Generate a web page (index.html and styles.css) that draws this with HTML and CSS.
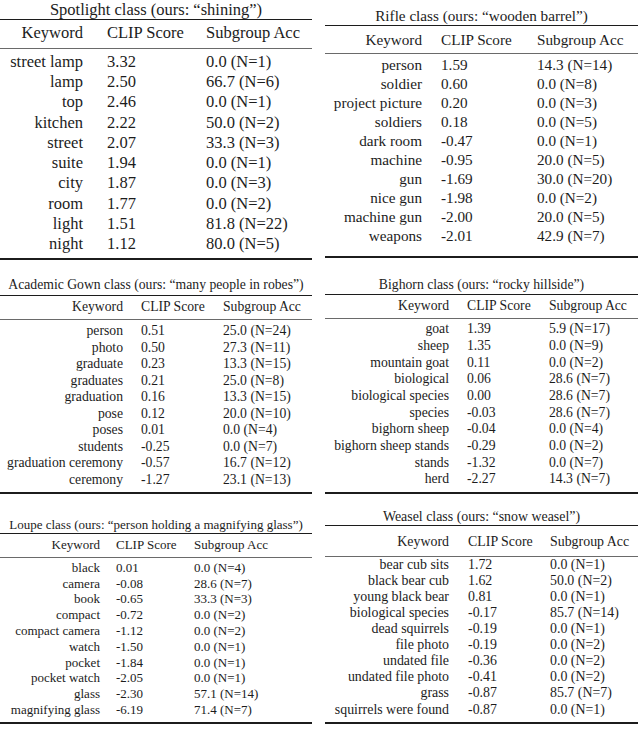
FILE: index.html
```html
<!DOCTYPE html>
<html lang="en">
<head>
<meta charset="utf-8">
<title>Keyword subgroup tables</title>
<link rel="stylesheet" href="styles.css">
</head>
<body>
<main class="page">
  <section class="tbl t1">
    <div class="cap">Spotlight class (ours: “shining”)</div>
    <table>
      <thead><tr><th class="kw">Keyword</th><th class="cs">CLIP Score</th><th class="sa">Subgroup Acc</th></tr></thead>
      <tbody>
        <tr><td class="kw">street lamp</td><td class="cs">3.32</td><td class="sa">0.0 (N=1)</td></tr>
        <tr><td class="kw">lamp</td><td class="cs">2.50</td><td class="sa">66.7 (N=6)</td></tr>
        <tr><td class="kw">top</td><td class="cs">2.46</td><td class="sa">0.0 (N=1)</td></tr>
        <tr><td class="kw">kitchen</td><td class="cs">2.22</td><td class="sa">50.0 (N=2)</td></tr>
        <tr><td class="kw">street</td><td class="cs">2.07</td><td class="sa">33.3 (N=3)</td></tr>
        <tr><td class="kw">suite</td><td class="cs">1.94</td><td class="sa">0.0 (N=1)</td></tr>
        <tr><td class="kw">city</td><td class="cs">1.87</td><td class="sa">0.0 (N=3)</td></tr>
        <tr><td class="kw">room</td><td class="cs">1.77</td><td class="sa">0.0 (N=2)</td></tr>
        <tr><td class="kw">light</td><td class="cs">1.51</td><td class="sa">81.8 (N=22)</td></tr>
        <tr><td class="kw">night</td><td class="cs">1.12</td><td class="sa">80.0 (N=5)</td></tr>
      </tbody>
    </table>
  </section>

  <section class="tbl t2">
    <div class="cap">Rifle class (ours: “wooden barrel”)</div>
    <table>
      <thead><tr><th class="kw">Keyword</th><th class="cs">CLIP Score</th><th class="sa">Subgroup Acc</th></tr></thead>
      <tbody>
        <tr><td class="kw">person</td><td class="cs">1.59</td><td class="sa">14.3 (N=14)</td></tr>
        <tr><td class="kw">soldier</td><td class="cs">0.60</td><td class="sa">0.0 (N=8)</td></tr>
        <tr><td class="kw">project picture</td><td class="cs">0.20</td><td class="sa">0.0 (N=3)</td></tr>
        <tr><td class="kw">soldiers</td><td class="cs">0.18</td><td class="sa">0.0 (N=5)</td></tr>
        <tr><td class="kw">dark room</td><td class="cs">-0.47</td><td class="sa">0.0 (N=1)</td></tr>
        <tr><td class="kw">machine</td><td class="cs">-0.95</td><td class="sa">20.0 (N=5)</td></tr>
        <tr><td class="kw">gun</td><td class="cs">-1.69</td><td class="sa">30.0 (N=20)</td></tr>
        <tr><td class="kw">nice gun</td><td class="cs">-1.98</td><td class="sa">0.0 (N=2)</td></tr>
        <tr><td class="kw">machine gun</td><td class="cs">-2.00</td><td class="sa">20.0 (N=5)</td></tr>
        <tr><td class="kw">weapons</td><td class="cs">-2.01</td><td class="sa">42.9 (N=7)</td></tr>
      </tbody>
    </table>
  </section>

  <section class="tbl t3">
    <div class="cap">Academic Gown class (ours: “many people in robes”)</div>
    <table>
      <thead><tr><th class="kw">Keyword</th><th class="cs">CLIP Score</th><th class="sa">Subgroup Acc</th></tr></thead>
      <tbody>
        <tr><td class="kw">person</td><td class="cs">0.51</td><td class="sa">25.0 (N=24)</td></tr>
        <tr><td class="kw">photo</td><td class="cs">0.50</td><td class="sa">27.3 (N=11)</td></tr>
        <tr><td class="kw">graduate</td><td class="cs">0.23</td><td class="sa">13.3 (N=15)</td></tr>
        <tr><td class="kw">graduates</td><td class="cs">0.21</td><td class="sa">25.0 (N=8)</td></tr>
        <tr><td class="kw">graduation</td><td class="cs">0.16</td><td class="sa">13.3 (N=15)</td></tr>
        <tr><td class="kw">pose</td><td class="cs">0.12</td><td class="sa">20.0 (N=10)</td></tr>
        <tr><td class="kw">poses</td><td class="cs">0.01</td><td class="sa">0.0 (N=4)</td></tr>
        <tr><td class="kw">students</td><td class="cs">-0.25</td><td class="sa">0.0 (N=7)</td></tr>
        <tr><td class="kw">graduation ceremony</td><td class="cs">-0.57</td><td class="sa">16.7 (N=12)</td></tr>
        <tr><td class="kw">ceremony</td><td class="cs">-1.27</td><td class="sa">23.1 (N=13)</td></tr>
      </tbody>
    </table>
  </section>

  <section class="tbl t4">
    <div class="cap">Bighorn class (ours: “rocky hillside”)</div>
    <table>
      <thead><tr><th class="kw">Keyword</th><th class="cs">CLIP Score</th><th class="sa">Subgroup Acc</th></tr></thead>
      <tbody>
        <tr><td class="kw">goat</td><td class="cs">1.39</td><td class="sa">5.9 (N=17)</td></tr>
        <tr><td class="kw">sheep</td><td class="cs">1.35</td><td class="sa">0.0 (N=9)</td></tr>
        <tr><td class="kw">mountain goat</td><td class="cs">0.11</td><td class="sa">0.0 (N=2)</td></tr>
        <tr><td class="kw">biological</td><td class="cs">0.06</td><td class="sa">28.6 (N=7)</td></tr>
        <tr><td class="kw">biological species</td><td class="cs">0.00</td><td class="sa">28.6 (N=7)</td></tr>
        <tr><td class="kw">species</td><td class="cs">-0.03</td><td class="sa">28.6 (N=7)</td></tr>
        <tr><td class="kw">bighorn sheep</td><td class="cs">-0.04</td><td class="sa">0.0 (N=4)</td></tr>
        <tr><td class="kw">bighorn sheep stands</td><td class="cs">-0.29</td><td class="sa">0.0 (N=2)</td></tr>
        <tr><td class="kw">stands</td><td class="cs">-1.32</td><td class="sa">0.0 (N=7)</td></tr>
        <tr><td class="kw">herd</td><td class="cs">-2.27</td><td class="sa">14.3 (N=7)</td></tr>
      </tbody>
    </table>
  </section>

  <section class="tbl t5">
    <div class="cap">Loupe class (ours: “person holding a magnifying glass”)</div>
    <table>
      <thead><tr><th class="kw">Keyword</th><th class="cs">CLIP Score</th><th class="sa">Subgroup Acc</th></tr></thead>
      <tbody>
        <tr><td class="kw">black</td><td class="cs">0.01</td><td class="sa">0.0 (N=4)</td></tr>
        <tr><td class="kw">camera</td><td class="cs">-0.08</td><td class="sa">28.6 (N=7)</td></tr>
        <tr><td class="kw">book</td><td class="cs">-0.65</td><td class="sa">33.3 (N=3)</td></tr>
        <tr><td class="kw">compact</td><td class="cs">-0.72</td><td class="sa">0.0 (N=2)</td></tr>
        <tr><td class="kw">compact camera</td><td class="cs">-1.12</td><td class="sa">0.0 (N=2)</td></tr>
        <tr><td class="kw">watch</td><td class="cs">-1.50</td><td class="sa">0.0 (N=1)</td></tr>
        <tr><td class="kw">pocket</td><td class="cs">-1.84</td><td class="sa">0.0 (N=1)</td></tr>
        <tr><td class="kw">pocket watch</td><td class="cs">-2.05</td><td class="sa">0.0 (N=1)</td></tr>
        <tr><td class="kw">glass</td><td class="cs">-2.30</td><td class="sa">57.1 (N=14)</td></tr>
        <tr><td class="kw">magnifying glass</td><td class="cs">-6.19</td><td class="sa">71.4 (N=7)</td></tr>
      </tbody>
    </table>
  </section>

  <section class="tbl t6">
    <div class="cap">Weasel class (ours: “snow weasel”)</div>
    <table>
      <thead><tr><th class="kw">Keyword</th><th class="cs">CLIP Score</th><th class="sa">Subgroup Acc</th></tr></thead>
      <tbody>
        <tr><td class="kw">bear cub sits</td><td class="cs">1.72</td><td class="sa">0.0 (N=1)</td></tr>
        <tr><td class="kw">black bear cub</td><td class="cs">1.62</td><td class="sa">50.0 (N=2)</td></tr>
        <tr><td class="kw">young black bear</td><td class="cs">0.81</td><td class="sa">0.0 (N=1)</td></tr>
        <tr><td class="kw">biological species</td><td class="cs">-0.17</td><td class="sa">85.7 (N=14)</td></tr>
        <tr><td class="kw">dead squirrels</td><td class="cs">-0.19</td><td class="sa">0.0 (N=1)</td></tr>
        <tr><td class="kw">file photo</td><td class="cs">-0.19</td><td class="sa">0.0 (N=2)</td></tr>
        <tr><td class="kw">undated file</td><td class="cs">-0.36</td><td class="sa">0.0 (N=2)</td></tr>
        <tr><td class="kw">undated file photo</td><td class="cs">-0.41</td><td class="sa">0.0 (N=2)</td></tr>
        <tr><td class="kw">grass</td><td class="cs">-0.87</td><td class="sa">85.7 (N=7)</td></tr>
        <tr><td class="kw">squirrels were found</td><td class="cs">-0.87</td><td class="sa">0.0 (N=1)</td></tr>
      </tbody>
    </table>
  </section>
</main>
</body>
</html>
```

FILE: styles.css
```css
html, body {
  margin: 0;
  padding: 0;
  background: #ffffff;
}

body {
  color: #1c1c1c;
  font-family: "Liberation Serif", "Times New Roman", serif;
}

.page {
  display: grid;
  grid-template-columns: 312px 313px;
  grid-template-rows: 265px 232px 233px;
  column-gap: 13px;
  width: 640px;
  height: 730px;
  overflow: hidden;
}

.tbl {
  font-family: "Liberation Serif", "Times New Roman", serif;
  font-size: var(--fs);
  min-width: 0;
}

.cap {
  text-align: center;
  white-space: nowrap;
  padding-top: var(--cap-pt);
  padding-bottom: var(--cap-pb);
  line-height: var(--cap-lh);
}

.tbl table {
  font: inherit;
  width: 100%;
  table-layout: fixed;
  border-collapse: separate;
  border-spacing: 0;
  border-top: var(--top-w) solid #1c1c1c;
  border-bottom: 2px solid #1c1c1c;
}

.tbl th,
.tbl td {
  font-family: "Liberation Serif", "Times New Roman", serif;
  font-size: var(--fs);
  font-weight: normal;
  color: #1c1c1c;
}

.tbl th {
  padding: var(--h-pt) 0 var(--h-pb) 0;
  line-height: var(--h-lh);
  border-bottom: 1px solid #6a6a6a;
  white-space: nowrap;
}

.tbl td {
  padding: 0;
  line-height: var(--r-lh);
  white-space: nowrap;
}

.tbl tbody tr:first-child td {
  padding-top: var(--b-pt);
}

.tbl tbody tr:last-child td {
  padding-bottom: var(--b-pb);
}

.tbl .kw {
  text-align: right;
}

.tbl th.kw {
  width: var(--c1);
}

.tbl .cs {
  text-align: left;
  padding-left: var(--g);
}

.tbl th.cs {
  width: calc(var(--c2) - var(--g));
}

.tbl .sa {
  text-align: left;
}

/* Spotlight */
.t1 {
  --fs: 16.5px;
  --cap-pt: 1px; --cap-lh: 18px; --cap-pb: 0px;
  --top-w: 1.5px;
  --h-pt: 3px; --h-lh: 20px; --h-pb: 4.5px;
  --b-pt: 3.15px; --r-lh: 20.3px; --b-pb: 3px;
  --c1: 83px; --c2: 123px; --g: 24px;
}

/* Rifle */
.t2 {
  --fs: 15.2px;
  --cap-pt: 6px; --cap-lh: 19px; --cap-pb: 0px;
  --top-w: 1.3px;
  --h-pt: 4px; --h-lh: 19px; --h-pb: 3.7px;
  --b-pt: 2.5px; --r-lh: 18.97px; --b-pb: 10.5px;
  --c1: 97px; --c2: 115px; --g: 19px;
}

/* Academic Gown */
.t3 {
  --fs: 13.7px;
  --cap-pt: 12px; --cap-lh: 16px; --cap-pb: 2px;
  --top-w: 1.3px;
  --h-pt: 2.7px; --h-lh: 16px; --h-pb: 4px;
  --b-pt: 3.46px; --r-lh: 16.48px; --b-pb: 3.7px;
  --c1: 123px; --c2: 100px; --g: 18px;
}

/* Bighorn */
.t4 {
  --fs: 13.7px;
  --cap-pt: 12px; --cap-lh: 16px; --cap-pb: 1px;
  --top-w: 1.3px;
  --h-pt: 2.7px; --h-lh: 16px; --h-pb: 4px;
  --b-pt: 2.67px; --r-lh: 16.67px; --b-pb: 3.6px;
  --c1: 124px; --c2: 100px; --g: 18px;
}

/* Loupe */
.t5 {
  --fs: 13px;
  --cap-pt: 20px; --cap-lh: 16px; --cap-pb: 0px;
  --top-w: 1.3px;
  --h-pt: 2.7px; --h-lh: 16px; --h-pb: 4px;
  --b-pt: 2.1px; --r-lh: 15.8px; --b-pb: 4.1px;
  --c1: 100px; --c2: 94px; --g: 16px;
}

/* Weasel */
.t6 {
  --fs: 13.9px;
  --cap-pt: 12px; --cap-lh: 16px; --cap-pb: 0px;
  --top-w: 1.3px;
  --h-pt: 7.7px; --h-lh: 16px; --h-pb: 6px;
  --b-pt: 0px; --r-lh: 16.1px; --b-pb: 4px;
  --c1: 124px; --c2: 101px; --g: 19px;
}
```
